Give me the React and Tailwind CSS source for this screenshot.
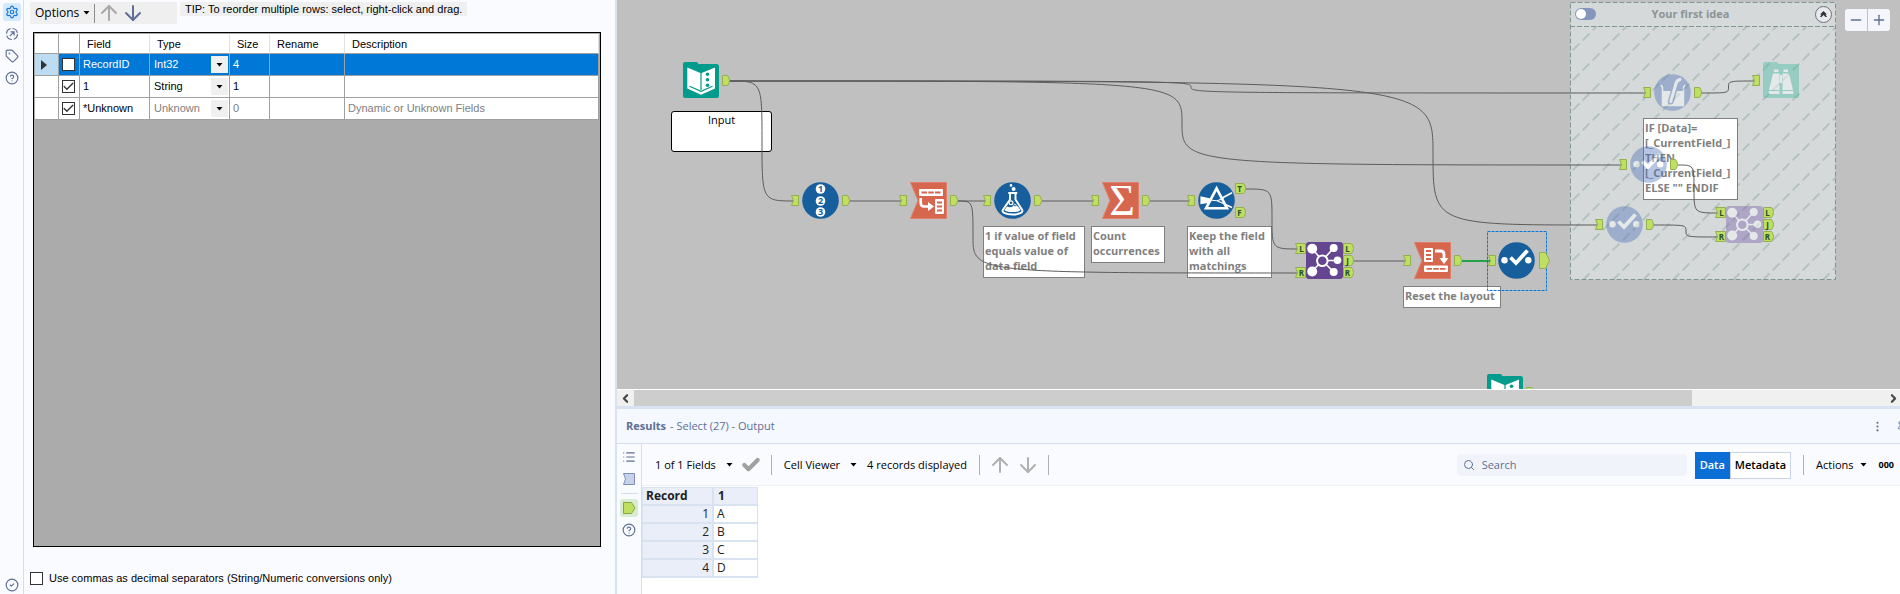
import { useState } from "react";
import {
  ArrowDown,
  ArrowUp,
  Check,
  ChevronLeft,
  ChevronRight,
  CircleCheck,
  CircleHelp,
  EllipsisVertical,
  List,
  Minus,
  Pin,
  Plus,
  Search,
  Settings,
  Tag,
} from "lucide-react";

const fieldRows = [
  { name: "RecordID", type: "Int32", size: "4", description: "", checked: false, selected: true },
  { name: "1", type: "String", size: "1", description: "", checked: true },
  { name: "*Unknown", type: "Unknown", size: "0", description: "Dynamic or Unknown Fields", checked: true, muted: true },
];

const records = ["A", "B", "C", "D"];

// Canvas coordinates, x/y is the top left corner of each tool icon
const nodes = [
  { id: "input", tool: "book", x: 66, y: 62, outs: [{ x: 105, y: 75 }] },
  { id: "recordId", tool: "recordId", x: 185, y: 182, ins: [{ x: 174, y: 195 }], outs: [{ x: 225, y: 195 }] },
  { id: "transpose", tool: "transpose", x: 293, y: 182, ins: [{ x: 282, y: 195 }], outs: [{ x: 333, y: 195 }] },
  { id: "formula", tool: "formula", x: 377, y: 182, ins: [{ x: 366, y: 195 }], outs: [{ x: 417, y: 195 }] },
  { id: "summarize", tool: "summarize", x: 485, y: 182, ins: [{ x: 474, y: 195 }], outs: [{ x: 525, y: 195 }] },
  {
    id: "filter",
    tool: "filter",
    x: 581,
    y: 182,
    ins: [{ x: 570, y: 195 }],
    outs: [{ x: 618, y: 183, label: "T" }, { x: 618, y: 207, label: "F" }],
  },
  {
    id: "join",
    tool: "join",
    x: 689,
    y: 242,
    ins: [{ x: 678, y: 243, label: "L" }, { x: 678, y: 267, label: "R" }],
    outs: [{ x: 726, y: 243, label: "L" }, { x: 726, y: 255, label: "J" }, { x: 726, y: 267, label: "R" }],
  },
  { id: "crossTab", tool: "crossTab", x: 797, y: 242, ins: [{ x: 786, y: 255 }], outs: [{ x: 837, y: 255 }] },
  { id: "select", tool: "select", x: 881, y: 242, ins: [{ x: 871, y: 255 }], outs: [{ x: 922, y: 252, large: true }] },
  { id: "multiField", tool: "beaker", x: 1037, y: 74, ins: [{ x: 1026, y: 87 }], outs: [{ x: 1077, y: 87 }], disabled: true },
  { id: "browse", tool: "browse", x: 1146, y: 62, ins: [{ x: 1135, y: 75 }], disabled: true },
  { id: "select2", tool: "select", x: 1013, y: 146, ins: [{ x: 1002, y: 159 }], outs: [{ x: 1053, y: 159 }], disabled: true },
  { id: "select3", tool: "select", x: 989, y: 206, ins: [{ x: 978, y: 219 }], outs: [{ x: 1029, y: 219 }], disabled: true },
  {
    id: "join2",
    tool: "join",
    x: 1109,
    y: 206,
    ins: [{ x: 1098, y: 207, label: "L" }, { x: 1098, y: 231, label: "R" }],
    outs: [{ x: 1146, y: 207, label: "L" }, { x: 1146, y: 219, label: "J" }, { x: 1146, y: 231, label: "R" }],
    disabled: true,
  },
  { id: "input2", tool: "book", x: 870, y: 374, outs: [{ x: 909, y: 387 }] },
];

const links = [
  { from: [112, 81], to: [1030, 93], mid: 574 },
  { from: [112, 81], to: [1006, 165], mid: 565 },
  { from: [112, 81], to: [982, 225], mid: 816 },
  { from: [112, 81], to: [178, 201] },
  { from: [232, 201], to: [286, 201] },
  { from: [341, 201], to: [370, 201] },
  { from: [341, 201], to: [682, 273], mid: 356 },
  { from: [425, 201], to: [478, 201] },
  { from: [533, 201], to: [574, 201] },
  { from: [628, 189], to: [682, 249] },
  { from: [736, 261], to: [790, 261] },
  { from: [845, 261], to: [875, 261], active: true },
  { from: [1084, 93], to: [1139, 81] },
  { from: [1061, 165], to: [1101, 213], mid: 1077 },
  { from: [1037, 225], to: [1101, 237] },
];

const comments = [
  { x: 366, y: 226, width: 102, lines: ["1 if value of field", "equals value of", "data field"] },
  { x: 474, y: 226, width: 74, lines: ["Count", "occurrences"] },
  { x: 570, y: 226, width: 85, lines: ["Keep the field", "with all", "matchings"] },
  { x: 786, y: 286, width: 98, lines: ["Reset the layout"] },
  { x: 1026, y: 118, width: 95, lines: ["IF [Data]=", "[_CurrentField_]", "THEN", "[_CurrentField_]", 'ELSE "" ENDIF'] },
];

function linkPath({ from: [x1, y1], to: [x2, y2], mid }) {
  if (y1 === y2) return `M${x1} ${y1}H${x2}`;
  const mx = mid ?? (x1 + x2) / 2;
  const my = (y1 + y2) / 2;
  return `M${x1} ${y1}C${mx} ${y1} ${mx} ${y1} ${mx} ${my}C${mx} ${y2} ${mx} ${y2} ${x2} ${y2}`;
}

function Caret({ className = "" }) {
  return (
    <svg width="7" height="4" viewBox="0 0 7 4" className={`shrink-0 ${className}`} aria-hidden="true">
      <path d="M0.5 0h6L3.5 3.5z" fill="currentColor" />
    </svg>
  );
}

function RunIcon() {
  return (
    <svg width="14" height="14" viewBox="0 0 14 14" fill="none" stroke="#5f6f94" aria-hidden="true">
      <circle cx="7" cy="7" r="5.500" strokeDasharray="6.600 2" strokeWidth="1.200" />
      <path d="M4.800 9.200l4-4M5.500 4.900h3.600v3.600" strokeWidth="1.200" />
    </svg>
  );
}

function Book() {
  return (
    <>
      <path d="M2 0h12l1.500 2H33.500a2.500 2.500 0 0 1 2.500 2.500V34a2 2 0 0 1-2 2H2a2 2 0 0 1-2-2V2a2 2 0 0 1 2-2z" fill="#039c8c" />
      <path d="M4.300 5.500L18 11.300 32 5.500V26.500L18 32.700 4.300 26.500z" fill="#fff" />
      <path d="M18 11v17M6.500 24.300L18 29.400l11.500-5.100" fill="none" stroke="#039c8c" strokeWidth="1.200" />
      <g fill="#039c8c">
        <circle cx="24.500" cy="12.300" r="1.800" />
        <circle cx="24.500" cy="17.800" r="1.800" />
        <circle cx="24.500" cy="23.300" r="1.800" />
      </g>
    </>
  );
}

function Disc({ disabled }) {
  return <circle cx="18.500" cy="18.500" r="18.300" fill={disabled ? "#4970b9" : "#175f9c"} />;
}

function Ribbon() {
  return <path d="M.5.5h36v36H.5L8 18.500z" fill="#d6674e" stroke="#e07f68" />;
}

function RecordId() {
  return (
    <>
      <Disc />
      {[7, 19, 30].map((cy, i) => (
        <g key={cy}>
          <circle cx="18.500" cy={cy} r="4.800" fill="#fff" />
          <text x="18.500" y={cy + 3} textAnchor="middle" fontSize="9" fontWeight="700" fill="#175f9c">
            {i + 1}
          </text>
        </g>
      ))}
    </>
  );
}

function Transpose() {
  return (
    <>
      <Ribbon />
      <rect x="9" y="7" width="24" height="7" rx="1" fill="#fff" />
      <path d="M11.500 10.500h5.500M18.300 10.500h5.500M25 10.500h5.500" stroke="#d6674e" strokeWidth="2" />
      <path d="M10.700 16v5q0 3.500 3.500 3.500h5" fill="none" stroke="#fff" strokeWidth="2.600" />
      <path d="M18 20l6 4.500-6 4.500z" fill="#fff" />
      <rect x="25" y="17" width="9" height="15" rx="1" fill="#fff" />
      <path d="M27 20.500h5M27 24.500h5M27 28.500h5" stroke="#d6674e" strokeWidth="2" />
    </>
  );
}

function Formula() {
  return (
    <>
      <Disc />
      <circle cx="17" cy="3.400" r="1.300" fill="#fff" />
      <circle cx="19.600" cy="7" r="2" fill="#fff" />
      <path d="M15 11h7.500M16 11v6.500L8.800 28c-1.300 2.500 3 4.500 9.700 4.500s11-2 9.700-4.500L21.500 17.500V11" fill="none" stroke="#fff" strokeWidth="1.900" strokeLinecap="round" />
      <path d="M13 24.500q3 1.500 5.500 0t5.500 0l2.500 3.600q-1.500 2-8 2t-8-2z" fill="#fff" />
      <circle cx="17" cy="20.800" r="1.900" fill="none" stroke="#fff" strokeWidth="1.200" />
      <circle cx="21" cy="23.500" r="1.200" fill="#175f9c" stroke="#fff" strokeWidth=".8" />
    </>
  );
}

function Summarize() {
  return (
    <>
      <Ribbon />
      <text x="20" y="33" textAnchor="middle" fontSize="44" fill="#fff" className="font-['Liberation_Serif',serif]">
        Σ
      </text>
    </>
  );
}

function Filter() {
  return (
    <>
      <Disc />
      <path d="M3.200 15.300v6L19 18.800zM19 18.800L34 10.800M19 18.800l15 6.700" fill="#fff" stroke="#fff" strokeWidth="1.600" />
      <path d="M18.600 6.300L29 26.300H8z" fill="#175f9c" stroke="#fff" strokeWidth="2.600" />
      <path d="M11 18l8 .8 6.500-2.300M19 18.800l7 3" fill="none" stroke="#fff" strokeWidth="1.100" />
    </>
  );
}

function Join({ disabled }) {
  return (
    <>
      <rect width="37" height="37" rx="3" fill={disabled ? "#785aac" : "#65458f"} />
      <g stroke="#fff" strokeWidth="1.600">
        <path d="M6 6.500l10.300 12L6 29.500M27.700 6L16.300 18.500l11.400 11.500M16.300 18.500h15" fill="none" />
        <circle cx="16.300" cy="18.700" r="5.300" fill={disabled ? "#785aac" : "#65458f"} strokeWidth="2" />
      </g>
      <g fill="#fff">
        <circle cx="6.200" cy="6.800" r="5" />
        <circle cx="6.200" cy="29.500" r="5" />
        <circle cx="27.700" cy="6" r="4" />
        <circle cx="27.700" cy="30" r="4" />
        <circle cx="31.500" cy="18.300" r="3.800" />
      </g>
    </>
  );
}

function CrossTab() {
  return (
    <>
      <Ribbon />
      <rect x="10" y="6" width="9" height="14" rx="1" fill="#fff" />
      <path d="M12 9h5M12 13h5M12 17h5" stroke="#d6674e" strokeWidth="1.800" />
      <path d="M21 9h5.500q3.500 0 3.500 3.500V17" fill="none" stroke="#fff" strokeWidth="2.800" />
      <path d="M25.500 16h9L30 22z" fill="#fff" />
      <rect x="10" y="23.500" width="24" height="6.500" rx="1" fill="#fff" />
      <path d="M12.500 26.800h5.500M19.300 26.800h5.500M26 26.800h5.500" stroke="#d6674e" strokeWidth="1.800" />
    </>
  );
}

function SelectTool({ disabled }) {
  return (
    <>
      <Disc disabled={disabled} />
      <circle cx="6.500" cy="18.300" r="3.200" fill="#fff" />
      <circle cx="30.300" cy="18.300" r="3.200" fill="#fff" />
      <path d="M12.500 15.500l5.500 5.500L29.500 8.500" fill="none" stroke="#fff" strokeWidth="3.800" />
    </>
  );
}

function Beaker() {
  return (
    <>
      <Disc disabled />
      <path d="M7 11l1.500 2.500v18h21v-18L31 11" fill="none" stroke="#fff" strokeWidth="1.500" />
      <path d="M8.500 17h21v14.500h-21z" fill="#fff" />
      <path d="M26 5.500q-3 .5-4 4L16.800 27.500" fill="none" stroke="#4970b9" strokeWidth="6" strokeLinecap="round" />
      <path d="M26 5.500q-3 .5-4 4L16.800 27.500" fill="none" stroke="#fff" strokeWidth="3" strokeLinecap="round" />
    </>
  );
}

function Browse() {
  return (
    <>
      <path d="M2 0h12l1.500 2H33.500a2.500 2.500 0 0 1 2.500 2.500V34a2 2 0 0 1-2 2H2a2 2 0 0 1-2-2V2a2 2 0 0 1 2-2z" fill="#3cb9a2" />
      <g fill="#fff">
        <path d="M11 7.500h4.500v2.500H11zM20.500 7.500H25v2.500h-4.500z" />
        <path d="M10 11.500h6.500v16.500H6zM19.500 11.500H26L30 28H19.500z" />
        <path d="M5.800 29h10.700v3H5.800zM19.500 29h10.700v3H19.500zM17 13h2v8h-2z" />
      </g>
    </>
  );
}

const tools = {
  book: Book,
  recordId: RecordId,
  transpose: Transpose,
  formula: Formula,
  summarize: Summarize,
  filter: Filter,
  join: Join,
  crossTab: CrossTab,
  select: SelectTool,
  beaker: Beaker,
  browse: Browse,
};

function Anchor({ x, y, label, large, input }) {
  let d = "M.5.5h5q2 2.500 2 5t-2 5h-5z";
  if (input) d = "M.5.5h7v10h-7l2-5z";
  if (label) d = input ? "M.5.5h10v10H.5l2-5z" : "M.5.5h8q2 2.500 2 5t-2 5h-8z";
  if (large) d = "M.5.5h6l4 8-4 8h-6z";
  return (
    <svg className="absolute overflow-visible" style={{ left: x, top: y }} width="11" height={large ? 17 : 11}>
      <path d={d} fill="#bfdf63" stroke="#93b04c" />
      {label && (
        <text x={input ? 6.5 : 4.5} y="8.500" textAnchor="middle" fontSize="8" fontWeight="700" fill="#24502f">
          {label}
        </text>
      )}
    </svg>
  );
}

function ToolNode({ node }) {
  const Glyph = tools[node.tool];
  return (
    <>
      <svg
        className={`absolute overflow-visible ${node.disabled ? "opacity-40" : ""}`}
        style={{ left: node.x, top: node.y }}
        width="37"
        height="37"
        viewBox="0 0 37 37"
      >
        <Glyph disabled={node.disabled} />
      </svg>
      {node.ins?.map((a) => (
        <Anchor key={`i${a.y}`} {...a} input />
      ))}
      {node.outs?.map((a) => (
        <Anchor key={`o${a.y}`} {...a} />
      ))}
    </>
  );
}

function IdeaContainer() {
  return (
    <section className="absolute left-[953px] top-0.5 h-[278px] w-[266px] bg-[#d5d9da]">
      <svg className="absolute inset-0 h-full w-full" aria-hidden="true">
        <defs>
          <pattern id="stripes" width="30" height="30" patternUnits="userSpaceOnUse" patternTransform="translate(21 0)">
            <path d="M30 0L0 30" stroke="#b5c2be" strokeWidth="2" strokeDasharray="9.640 4.500" strokeDashoffset="-2.200" />
          </pattern>
        </defs>
        <rect y="24" width="100%" height="254" fill="url(#stripes)" />
        <path d="M0 24.500H266" stroke="#819591" strokeDasharray="5 2" />
        <rect x=".5" y=".5" width="265" height="277" fill="none" stroke="#819591" strokeDasharray="5 2" />
      </svg>
      <header className="relative flex h-6 items-center pr-1 pl-[5px]">
        <button aria-label="Enable container" className="flex h-3 w-[21px] items-center rounded-full bg-[#8596bd] px-px">
          <span className="size-2.5 rounded-full bg-white" />
        </button>
        <h2 className="flex-1 pr-[30px] text-center text-[11px] font-bold text-[#8b9493]">Your first idea</h2>
        <button
          aria-label="Collapse container"
          className="flex size-[17px] items-center justify-center rounded-full border border-[#6d7077] bg-[#e9eaef]"
        >
          <svg width="7" height="6" viewBox="0 0 7 6">
            <path d="M0 3.500L3.500 0 7 3.500H5.500L7 6H5.500l-2-2-2 2H0l1.500-2.500z" fill="#333" />
          </svg>
        </button>
      </header>
    </section>
  );
}

function Canvas() {
  return (
    <div className="relative min-h-[300px] flex-1 overflow-hidden bg-[#c0c0c0]">
      <IdeaContainer />
      <div className="absolute left-[54px] top-[111px] h-[41px] w-[101px] rounded-[3px] border border-black bg-white text-center text-[11px] leading-4 text-black">
        Input
      </div>
      {comments.map((c) => (
        <div
          key={c.x}
          className="absolute border border-[#7f7f7f] bg-white px-px pt-px pb-1 text-[11px] leading-[15px] font-bold whitespace-nowrap text-[#7f7f7f]"
          style={{ left: c.x, top: c.y, width: c.width }}
        >
          {c.lines.map((line, i) => (
            <div key={i}>{line}</div>
          ))}
        </div>
      ))}
      <svg className="absolute inset-0 h-full w-full" fill="none" aria-hidden="true">
        {links.map((l) => (
          <path
            key={linkPath(l)}
            d={linkPath(l)}
            stroke={l.active ? "#25a04c" : "#5c5c5c"}
            strokeWidth={l.active ? 2 : 1}
          />
        ))}
        <rect x="870.500" y="231.500" width="59" height="59" stroke="#0a78d8" strokeDasharray="3 1" />
      </svg>
      {nodes.map((n) => (
        <ToolNode key={n.id} node={n} />
      ))}
      <div className="absolute top-[9px] right-2.5 flex gap-px overflow-hidden rounded-[3px] text-[#5f6f94]">
        <button aria-label="Zoom out" className="flex size-[22px] items-center justify-center bg-[#f4f6fc]">
          <Minus size={16} />
        </button>
        <button aria-label="Zoom in" className="flex size-[22px] items-center justify-center bg-[#f4f6fc]">
          <Plus size={16} />
        </button>
      </div>
    </div>
  );
}

function CheckBox({ id, label, defaultChecked }) {
  return (
    <span className="inline-grid size-[13px] shrink-0 place-items-center">
      <input
        id={id}
        type="checkbox"
        aria-label={label}
        defaultChecked={defaultChecked}
        className="peer size-[13px] appearance-none border border-[#333] bg-white [grid-area:1/1]"
      />
      <Check size={13} strokeWidth={2.5} className="pointer-events-none hidden text-[#333] [grid-area:1/1] peer-checked:block" />
    </span>
  );
}

function FieldTable() {
  const cell = "border-r border-b border-[#a0a0a0] p-0";
  const head = "border-r border-[#e2e2e2] p-0 pt-0.5 pl-[7px] text-left font-normal";
  return (
    <table className="w-full table-fixed border-separate border-spacing-0 bg-white font-['Liberation_Sans',Arial,sans-serif] text-[11px] text-black">
      <colgroup>
        <col className="w-6" />
        <col className="w-[21px]" />
        <col className="w-[70px]" />
        <col className="w-20" />
        <col className="w-10" />
        <col className="w-[75px]" />
        <col />
      </colgroup>
      <thead>
        <tr className="h-5">
          <th className="border-r border-b border-[#a0a0a0]" />
          <th className="border-r border-b border-[#a0a0a0]" />
          {["Field", "Type", "Size", "Rename", "Description"].map((h) => (
            <th key={h} className={`${head} border-b border-b-[#a0a0a0]`}>
              {h}
            </th>
          ))}
        </tr>
      </thead>
      <tbody>
        {fieldRows.map((row) => (
          <tr key={row.name} className={`h-[22px] ${row.selected ? "bg-[#0078d7] text-white" : ""}`}>
            <td className={`${cell} ${row.selected ? "bg-[#bcdcf4]" : ""}`}>
              {row.selected && (
                <svg width="6" height="10" viewBox="0 0 6 10" className="ml-1.5" aria-hidden="true">
                  <path d="M0 0l6 5-6 5z" fill="#333" />
                </svg>
              )}
            </td>
            <td className={cell}>
              <div className="flex pl-[3px]">
                <CheckBox label={row.name} defaultChecked={row.checked} />
              </div>
            </td>
            <td className={`${cell} pl-[3px]`}>{row.name}</td>
            <td className={`${cell} pr-px pl-1`}>
              <div className="grid grid-cols-[1fr_17px]">
                <select
                  aria-label={`${row.name} type`}
                  className={`col-span-2 col-start-1 row-start-1 appearance-none ${row.muted ? "text-[#808080]" : ""}`}
                  defaultValue={row.type}
                >
                  <option>{row.type}</option>
                </select>
                <span className="pointer-events-none col-start-2 row-start-1 flex h-[17px] items-center justify-center bg-[#f0f0f0] text-black">
                  <Caret />
                </span>
              </div>
            </td>
            <td className={`${cell} pl-[3px] ${row.muted ? "text-[#808080]" : ""}`}>{row.size}</td>
            <td className={cell} />
            <td className={`${cell} pl-[3px] text-[#808080]`}>{row.description}</td>
          </tr>
        ))}
      </tbody>
    </table>
  );
}

function ConfigPanel() {
  return (
    <aside className="flex w-[617px] shrink-0 border-r-2 border-[#d9e2f1] bg-[#fafbfe]">
      <nav className="flex w-6 shrink-0 flex-col items-center border-r border-[#d5deee] pt-[3px] pb-0.5 text-[#5f6f94]">
        <button aria-label="Configuration" className="flex size-[18px] items-center justify-center rounded-[3px] bg-[#d3e9ff] text-[#1776d2]">
          <Settings size={14} />
        </button>
        <button aria-label="Navigation" className="mt-1.5">
          <RunIcon />
        </button>
        <button aria-label="Annotation" className="mt-2">
          <Tag size={14} />
        </button>
        <button aria-label="Help" className="mt-2">
          <CircleHelp size={14} />
        </button>
        <button aria-label="Status" className="mt-auto">
          <CircleCheck size={14} />
        </button>
      </nav>
      <div className="flex min-w-0 flex-1 flex-col pt-0.5 pr-3.5 pl-1.5">
        <div className="flex h-[30px] items-start gap-[3px]">
          <div className="flex h-[22px] w-[147px] items-center bg-[#efefef] pl-[5px]">
            <button className="flex items-center gap-1 text-[12px] text-black">
              Options
              <Caret />
            </button>
            <span className="ml-1 h-[19px] w-px bg-[#8c8c8c]" />
            <button aria-label="Move up" className="ml-0.5 text-[#a9a9a9]">
              <ArrowUp size={24} />
            </button>
            <button aria-label="Move down" className="text-[#5f6f94]">
              <ArrowDown size={24} />
            </button>
          </div>
          <p className="bg-[#efefef] px-[5px] font-['Liberation_Sans',Arial,sans-serif] text-[11px] leading-[14px] text-black">
            TIP: To reorder multiple rows: select, right-click and drag.
          </p>
        </div>
        <div className="ml-[3px] flex-1 border border-black bg-[#ababab] p-px">
          <FieldTable />
        </div>
        <div className="flex h-[47px] items-center gap-1.5 pt-[15px] font-['Liberation_Sans',Arial,sans-serif] text-[11px] text-black">
          <CheckBox id="commas" />
          <label htmlFor="commas">Use commas as decimal separators (String/Numeric conversions only)</label>
        </div>
      </div>
    </aside>
  );
}

function ScrollBar() {
  return (
    <div className="flex h-[17px] shrink-0 items-center border-t border-white bg-[#f0f0f0] text-[#444]">
      <span className="flex w-[17px] justify-center">
        <ChevronLeft size={13} strokeWidth={4} />
      </span>
      <span className="h-full flex-1 bg-[#cdcdcd]" />
      <span className="flex w-52 justify-end">
        <ChevronRight size={13} strokeWidth={4} />
      </span>
    </div>
  );
}

function ResultsToolbar() {
  const [view, setView] = useState("Data");
  return (
    <div className="flex h-[42px] shrink-0 items-center border-b border-[#eef0f4] bg-[#fafbfe] pt-px pr-1.5 pl-[13px] text-[11px] whitespace-nowrap text-black">
      <button className="flex items-center gap-2.5">
        1 of 1 Fields
        <Caret />
      </button>
      <button aria-label="Apply" className="ml-2 text-[#a0a0a0]">
        <Check size={20} strokeWidth={5} />
      </button>
      <span className="ml-2.5 h-5 w-px bg-[#b0b0b0]" />
      <button className="ml-3 flex items-center gap-2.5">
        Cell Viewer
        <Caret />
      </button>
      <span className="ml-2.5">4 records displayed</span>
      <span className="ml-3 h-5 w-px bg-[#b0b0b0]" />
      <button aria-label="Previous" className="ml-2 text-[#b0b0b0]">
        <ArrowUp size={24} />
      </button>
      <button aria-label="Next" className="ml-1 text-[#b0b0b0]">
        <ArrowDown size={24} />
      </button>
      <span className="ml-2 h-5 w-px bg-[#b0b0b0]" />
      <label className="ml-auto flex h-[22px] w-[230px] items-center gap-[7px] rounded-[4px] bg-[#f0f4fa] pl-1.5 text-[#5f6f94]">
        <Search size={12} />
        <input type="search" placeholder="Search" aria-label="Search" className="min-w-0 flex-1 placeholder:text-[#5f6f94]" />
      </label>
      <div className="ml-2 flex h-[27px] font-semibold">
        {["Data", "Metadata"].map((v) => (
          <button
            key={v}
            onClick={() => setView(v)}
            className={`border px-1 ${
              view === v ? "border-[#0b6ed5] bg-[#0b6ed5] text-white" : "border-[#c9d4ea] bg-white text-black"
            }`}
          >
            {v}
          </button>
        ))}
      </div>
      <span className="ml-3 h-5 w-px bg-[#b0b0b0]" />
      <button className="ml-3 flex items-center gap-1.5">
        Actions
        <Caret />
      </button>
      <button aria-label="More" className="ml-3 text-[9px] font-bold">
        000
      </button>
    </div>
  );
}

function Results() {
  return (
    <section className="flex shrink-0 flex-col border-t-[3px] border-[#d9e2f1] bg-white text-[12px]">
      <header className="flex h-[35px] items-center border-b border-[#d5deee] bg-[#f5f8fe] pl-[9px] text-[11px] text-[#5f6f94]">
        <h1 className="font-bold">Results</h1>
        <span className="ml-1">- Select (27) - Output</span>
        <button aria-label="Panel menu" className="ml-auto">
          <EllipsisVertical size={13} />
        </button>
        <button aria-label="Pin panel" className="ml-3 w-1 overflow-hidden">
          <Pin size={11} className="max-w-none" />
        </button>
      </header>
      <div className="flex min-h-[150px]">
        <nav className="flex w-[25px] shrink-0 flex-col items-center border-r border-[#d5deee] bg-[#fafbfe] pt-1.5 text-[#5f6f94]">
          <button aria-label="Messages">
            <List size={14} />
          </button>
          <button aria-label="Input anchor" className="mt-[9px]">
            <svg width="12" height="12">
              <path d="M.5.5h11v11H.5l2-5.500z" fill="#c6d1ea" stroke="#7d8fb8" />
            </svg>
          </button>
          <span className="mt-2 h-px w-[17px] bg-[#d5deee]" />
          <button aria-label="Output anchor" className="mt-[5px] flex size-[18px] items-center justify-center rounded-[3px] bg-[#d8ecd0]">
            <svg width="13" height="12">
              <path d="M.5.5h8l3.500 5.500-3.500 5.500h-8z" fill="#bfdf63" stroke="#86a63f" />
            </svg>
          </button>
          <button aria-label="Results help" className="mt-1.5">
            <CircleHelp size={14} />
          </button>
        </nav>
        <div className="flex min-w-0 flex-1 flex-col">
          <ResultsToolbar />
          <table className="mt-px w-[116px] table-fixed border-separate border-spacing-0 border border-[#d9e2f1] leading-4 text-[#222]">
            <thead>
              <tr className="bg-[#e9eef9] text-left">
                <th className="w-[70px] border border-t-0 border-l-0 border-[#d9e2f1] p-0 pl-[3px] font-bold">Record</th>
                <th className="border border-t-0 border-r-0 border-[#d9e2f1] p-0 pl-1 font-bold">1</th>
              </tr>
            </thead>
            <tbody>
              {records.map((value, i) => (
                <tr key={value}>
                  <td className="border border-l-0 border-[#d9e2f1] bg-[#e9eef9] p-0 pr-[3px] text-right">{i + 1}</td>
                  <td className="border border-r-0 border-[#d9e2f1] p-0 pl-[3px]">{value}</td>
                </tr>
              ))}
            </tbody>
          </table>
        </div>
      </div>
    </section>
  );
}

export default function App() {
  return (
    <div className="flex h-screen min-h-[560px] overflow-hidden bg-white font-['Open_Sans','Noto_Sans',sans-serif]">
      <ConfigPanel />
      <main className="flex min-w-0 flex-1 flex-col">
        <Canvas />
        <ScrollBar />
        <Results />
      </main>
    </div>
  );
}
